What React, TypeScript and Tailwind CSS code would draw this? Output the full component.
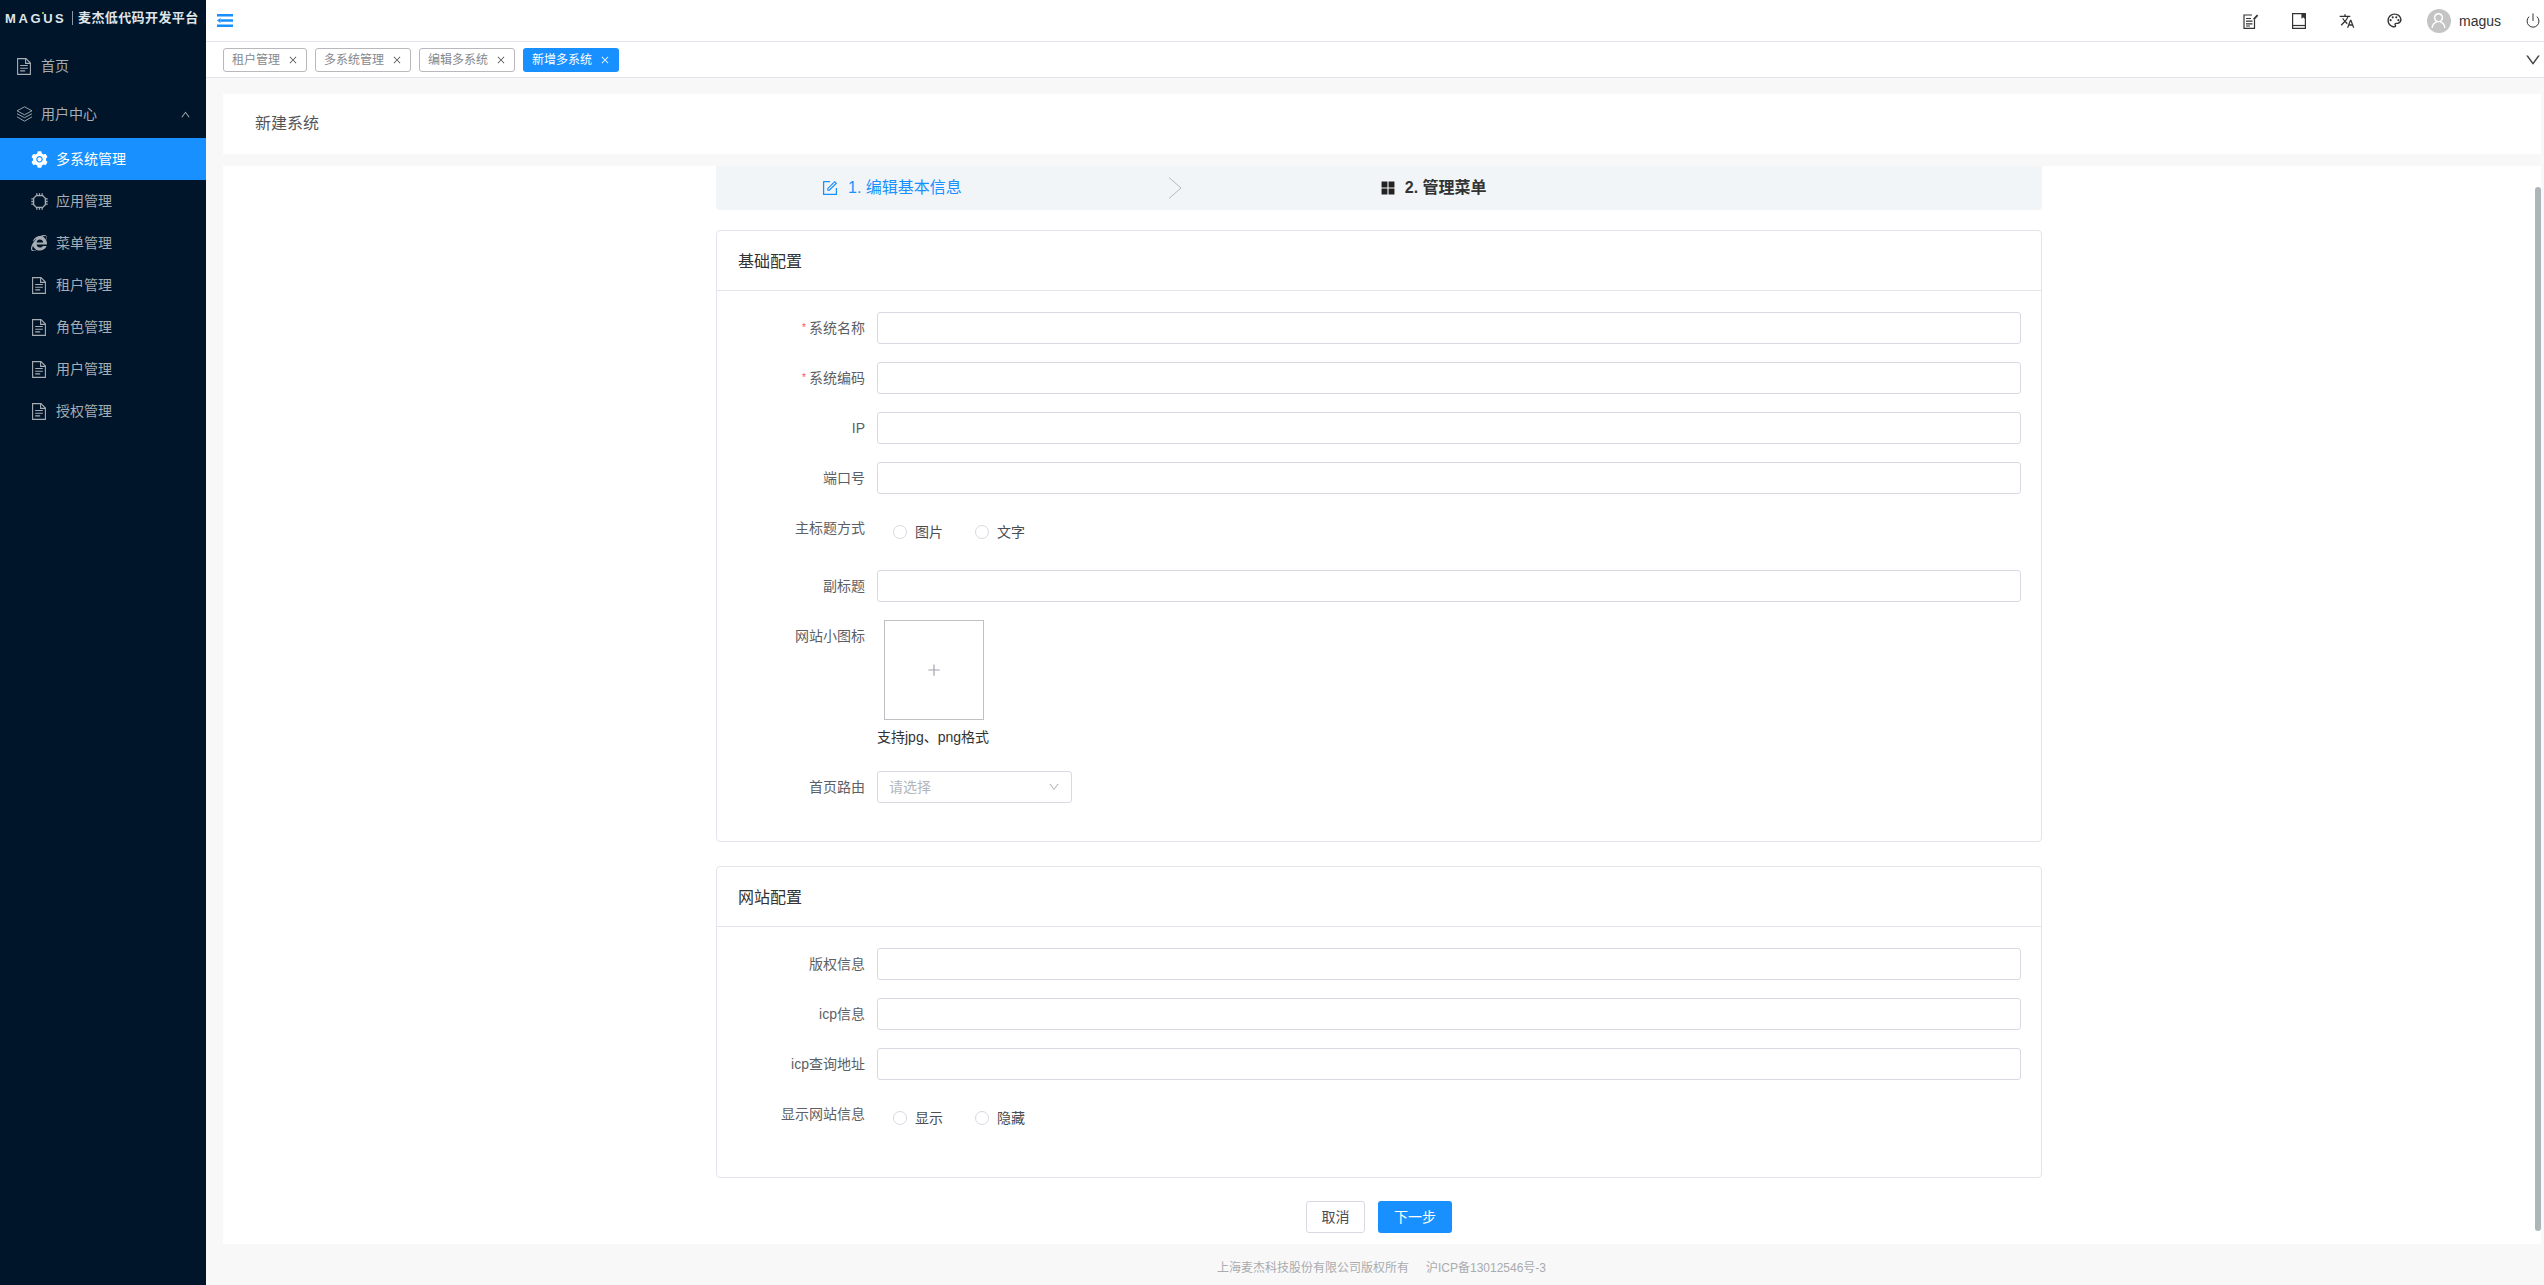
import type { ReactNode } from "react";
import {
  AiFillAppstore,
  AiFillSetting,
  AiOutlineClose,
  AiOutlineDown,
  AiOutlineForm,
  AiOutlinePlus,
  AiOutlineUp,
  AiOutlineUser,
} from "react-icons/ai";
import { FaInternetExplorer } from "react-icons/fa";
import { MdOutlinePalette, MdTranslate } from "react-icons/md";
import { Power } from "lucide-react";

const menuItems = ["应用管理", "菜单管理", "租户管理", "角色管理", "用户管理", "授权管理"];
const tabs = ["租户管理", "多系统管理", "编辑多系统"];

function ChipIcon() {
  return (
    <svg width="17" height="17" viewBox="0 0 16 16" fill="none" stroke="currentColor" strokeWidth="1.2">
      <path d="M5 2.500h6l2.500 2.500v6L11 13.500H5L2.500 11V5z" />
      <path d="M5.500 0.300v2.200M8 0.300v2.200M10.500 0.300v2.200M5.500 13.500v2.200M8 13.500v2.200M10.500 13.500v2.200M0.300 5.500h2.200M0.300 8h2.200M0.300 10.500h2.200M13.500 5.500h2.200M13.500 8h2.200M13.500 10.500h2.200" />
    </svg>
  );
}

function DocIcon() {
  return (
    <svg width="14" height="17" viewBox="0 0 14 17" fill="none" stroke="currentColor" strokeWidth="1.100">
      <path d="M.600.600h8.400l4.400 4.400v11.400H.600z" />
      <path d="M8.600.600v4.800h4.800" />
      <path d="M3.200 7.500h7.600M3.200 10.200h7.600M3.200 12.900h5" />
    </svg>
  );
}

function LayersIcon() {
  return (
    <svg width="17" height="17" viewBox="0 0 17 17" fill="none" stroke="currentColor" strokeWidth="0.9">
      <path d="M8.500 0.800 16 4.800l-7.500 4-7.500-4z" />
      <path d="M1 7.700l7.500 4 7.500-4" />
      <path d="M1 10.800l7.500 4.400 7.500-4.400" />
    </svg>
  );
}

function CollapseIcon() {
  return (
    <svg width="16" height="13" viewBox="0 0 16 13" fill="#1890ff">
      <rect width="16" height="2.500" />
      <rect x="3.500" y="5.250" width="12.500" height="2.500" />
      <rect y="10.500" width="16" height="2.500" />
      <path d="M0 6.500 3.500 4v5z" />
    </svg>
  );
}

function NoteIcon() {
  return (
    <svg width="16" height="16" viewBox="0 0 16 16" fill="none" stroke="#333" strokeWidth="1.200">
      <path d="M11.500 6.500v8.900H1V2h8" />
      <path d="M3 5.500h5M3 8.200h6.500M3 10.800h6.500M3 13h4" />
      <path d="M10 5.800 14 1.500l1.300 1.300-4 4.200z" fill="#333" stroke="none" />
    </svg>
  );
}

function BookIcon() {
  return (
    <svg width="14" height="16" viewBox="0 0 14 16" fill="none" stroke="#333" strokeWidth="1.200">
      <path d="M.600.600h12.800v14.800H.600z" />
      <path d="M.600 12.500h12.800" />
      <path d="M10 .600v4l1.300-1 1.200 1v-4" fill="#333" />
    </svg>
  );
}

function AvatarIcon() {
  return (
    <span className="flex h-6 w-6 items-center justify-center rounded-full bg-[#c4c4c4] text-white">
      <AiOutlineUser size={19} />
    </span>
  );
}

function IconBox({ children }: { children: ReactNode }) {
  return <span className="flex w-4 shrink-0 justify-center [&>svg]:shrink-0">{children}</span>;
}

function SideItem({ icon, label, active }: { icon: ReactNode; label: string; active?: boolean }) {
  return (
    <div
      className={
        active
          ? "flex h-[42px] items-center gap-[9px] bg-[#1890ff] pl-[31px] text-white"
          : "flex h-[42px] items-center gap-[9px] pl-[31px] text-[#a6adb4]"
      }
    >
      <IconBox>{icon}</IconBox>
      <span>{label}</span>
    </div>
  );
}

function Field({ label, required, children }: { label: string; required?: boolean; children: ReactNode }) {
  return (
    <div className="flex items-start">
      <label className="flex h-8 w-[148px] shrink-0 items-center justify-end text-[#5c5f66]">
        {required && <span className="mr-[3px] text-[10px] text-[#ff4d4f]">*</span>}
        {label}
      </label>
      <div className="ml-[12px] min-w-0 flex-1">{children}</div>
    </div>
  );
}

function TextInput() {
  return <div className="h-8 rounded-[3px] border border-[#d8d9e3] bg-white" />;
}

function RadioGroup({ options }: { options: string[] }) {
  return (
    <div className="flex h-10 items-center gap-8 pl-4 text-[#4a4d52]">
      {options.map((option) => (
        <span key={option} className="flex items-center gap-2">
          <span className="h-[14px] w-[14px] rounded-full border border-[#d8d9e3]" />
          {option}
        </span>
      ))}
    </div>
  );
}

function Panel({ title, children, className }: { title: string; children: ReactNode; className: string }) {
  return (
    <section className={`rounded-[4px] border border-[#e3e4ec] ${className}`}>
      <h3 className="flex h-[60px] items-center border-b border-[#e3e4ec] pt-[2px] pl-[21px] text-base font-normal text-[#333]">
        {title}
      </h3>
      <div className="flex flex-col gap-[18px] pt-[21px] pr-5">{children}</div>
    </section>
  );
}

export default function App() {
  return (
    <div className="flex h-[1285px] overflow-hidden bg-[#f8f8f8] font-['Liberation_Sans','Noto_Sans_CJK_SC',sans-serif] text-sm">
      {/* Sidebar */}
      <aside className="w-[206px] shrink-0 bg-[#001529]">
        <div className="flex h-[36px] items-center pl-[5px] text-[#dfe5ea]">
          <span className="relative w-[62px] text-[13px] leading-none font-bold tracking-[2.6px]">
            MAGUS
            <span className="absolute top-0 left-[37px] h-[2px] w-[2px] bg-[#6fc04a]" />
          </span>
          <span className="mx-[5px] h-[14px] w-px bg-[#8a96a3]" />
          <span className="text-[13px] font-bold tracking-[0.4px] whitespace-nowrap">麦杰低代码开发平台</span>
        </div>
        <div className="mt-[9px] flex h-[42px] items-center gap-[9px] pl-4 text-[#a6adb4]">
          <IconBox>
            <DocIcon />
          </IconBox>
          <span>首页</span>
        </div>
        <div className="mt-[6px] flex h-[42px] items-center gap-[9px] pl-4 text-[#a6adb4]">
          <IconBox>
            <LayersIcon />
          </IconBox>
          <span className="flex-1">用户中心</span>
          <AiOutlineUp size={11} className="mr-[15px]" />
        </div>
        <div className="mt-[3px]">
          <SideItem active icon={<AiFillSetting size={19} />} label="多系统管理" />
          {menuItems.map((label, i) => (
            <SideItem
              key={label}
              label={label}
              icon={i === 0 ? <ChipIcon /> : i === 1 ? <FaInternetExplorer size={16} /> : <DocIcon />}
            />
          ))}
        </div>
      </aside>

      <div className="flex min-w-0 flex-1 flex-col">
        {/* Top bar */}
        <header className="flex h-[42px] shrink-0 items-center border-b border-[#e3e4ec] bg-white pr-[3px] pl-[11px]">
          <CollapseIcon />
          <div className="ml-auto flex items-center text-[#333]">
            <span className="flex w-12 justify-center">
              <NoteIcon />
            </span>
            <span className="flex w-12 justify-center">
              <BookIcon />
            </span>
            <span className="flex w-12 justify-center">
              <MdTranslate size={16} />
            </span>
            <span className="flex w-12 justify-center">
              <MdOutlinePalette size={17} />
            </span>
            <span className="ml-2 flex items-center gap-2">
              <AvatarIcon />
              <span>magus</span>
            </span>
            <span className="ml-6 flex w-[16px] justify-center">
              <Power size={17} strokeWidth={1.5} />
            </span>
          </div>
        </header>

        {/* Tabs */}
        <div className="flex h-[36px] shrink-0 items-center gap-2 border-b border-[#e3e4ec] bg-white pl-[17px]">
          {tabs.map((tab) => (
            <span
              key={tab}
              className="flex h-6 items-center gap-2 rounded-[3px] border border-[#b9b9bd] px-2 text-xs text-[#85888c]"
            >
              {tab}
              <AiOutlineClose size={10} className="text-[#55585c]" />
            </span>
          ))}
          <span className="flex h-6 items-center gap-2 rounded-[3px] bg-[#1890ff] px-[9px] text-xs text-white">
            新增多系统
            <AiOutlineClose size={10} />
          </span>
          <AiOutlineDown size={18} className="mr-[2px] ml-auto text-[#444]" />
        </div>

        {/* Content */}
        <main className="flex min-h-0 flex-1 flex-col pt-4 pr-[3px] pl-[17px]">
          <div className="flex h-[60px] shrink-0 items-center bg-white pl-8 text-base text-[#555]">新建系统</div>
          <div className="relative mt-3 flex min-h-0 flex-1 flex-col items-center bg-white pr-[6px]">
            <div className="absolute top-[21px] right-0 h-[1044px] w-[6px] rounded-[3px] bg-[#adb5b9]" />
            <div className="w-[1326px]">
              <div className="flex h-[44px] items-center rounded-b-[4px] bg-[#f2f5f8] pl-[105px]">
                <AiOutlineForm size={18} className="text-[#1890ff]" />
                <span className="ml-[9px] text-base text-[#1890ff]">1. 编辑基本信息</span>
                <svg width="14" height="22" viewBox="0 0 14 22" fill="none" stroke="#b5b8bb" className="ml-[206px]">
                  <path d="M1 .500 13 11 1 21.500" />
                </svg>
                <AiFillAppstore size={18} className="ml-[197px] text-[#222]" />
                <span className="ml-[8px] text-base font-bold text-[#333]">2. 管理菜单</span>
              </div>

              <Panel title="基础配置" className="mt-5 h-[612px]">
                <Field label="系统名称" required>
                  <TextInput />
                </Field>
                <Field label="系统编码" required>
                  <TextInput />
                </Field>
                <Field label="IP">
                  <TextInput />
                </Field>
                <Field label="端口号">
                  <TextInput />
                </Field>
                <Field label="主标题方式">
                  <RadioGroup options={["图片", "文字"]} />
                </Field>
                <Field label="副标题">
                  <TextInput />
                </Field>
                <Field label="网站小图标">
                  <div className="ml-[7px] flex h-[100px] w-[100px] items-center justify-center border border-[#c0c0c4] text-[#a0a3ad]">
                    <AiOutlinePlus size={16} />
                  </div>
                  <p className="mt-[7px] pb-[6px] text-[#333]">支持jpg、png格式</p>
                </Field>
                <Field label="首页路由">
                  <div className="flex h-8 w-[195px] items-center justify-between rounded-[3px] border border-[#d8d9e3] px-[11px] text-[#b3b6bb]">
                    请选择
                    <AiOutlineDown size={12} />
                  </div>
                </Field>
              </Panel>

              <Panel title="网站配置" className="mt-6 h-[312px]">
                <Field label="版权信息">
                  <TextInput />
                </Field>
                <Field label="icp信息">
                  <TextInput />
                </Field>
                <Field label="icp查询地址">
                  <TextInput />
                </Field>
                <Field label="显示网站信息">
                  <RadioGroup options={["显示", "隐藏"]} />
                </Field>
              </Panel>

              <div className="mt-[23px] flex justify-center gap-[13px]">
                <button className="h-8 w-[59px] rounded-[3px] border border-[#d8d9e3] bg-white text-[#4a4d52]">取消</button>
                <button className="h-8 w-[74px] rounded-[3px] bg-[#1890ff] text-white">下一步</button>
              </div>
            </div>
          </div>
        </main>

        {/* Footer */}
        <footer className="flex h-[41px] shrink-0 items-center justify-center gap-[17px] bg-[#f8f8f8] pt-[7px] pl-[13px] text-xs text-[#a9abaf]">
          <span>上海麦杰科技股份有限公司版权所有</span>
          <span>沪ICP备13012546号-3</span>
        </footer>
      </div>
    </div>
  );
}
